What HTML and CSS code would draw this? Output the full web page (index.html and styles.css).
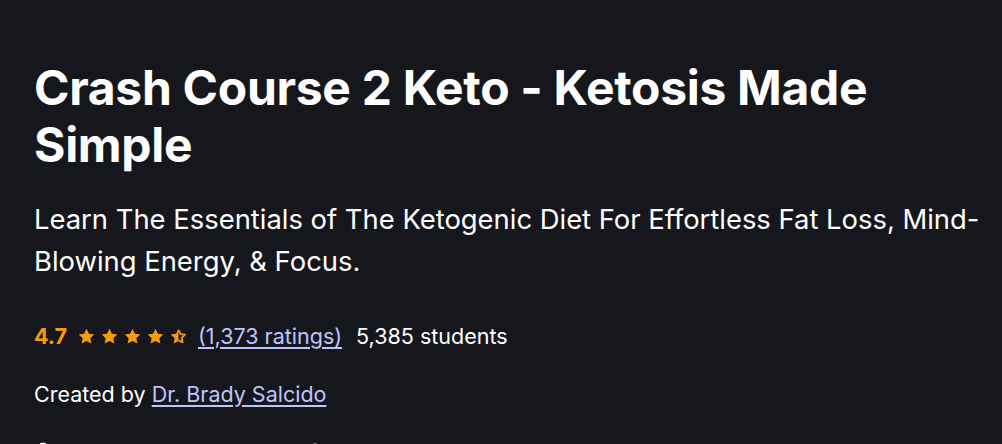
FILE: index.html
```html
<!DOCTYPE html>
<html lang="en">

<head>
  <meta charset="UTF-8">
  <meta name="viewport" content="width=device-width, initial-scale=1.0">
  <title>Crash Course 2 Keto</title>
  <link rel="stylesheet" href="styles.css">
</head>

<body>
  <main class="course">
    <h1 class="title">Crash Course 2 Keto - Ketosis Made Simple</h1>
    <p class="subtitle">Learn The Essentials of The Ketogenic Diet For Effortless Fat Loss, Mind-Blowing Energy, &amp; Focus.</p>

    <div class="rating">
      <span class="score">4.7</span>
      <span class="stars">
        <svg viewBox="0 0 24 24"><path d="M12 1l3.4 7.1 7.6.9-5.6 5.3 1.5 7.7L12 18.2 5.1 22l1.5-7.7L1 9l7.6-.9z" /></svg>
        <svg viewBox="0 0 24 24"><path d="M12 1l3.4 7.1 7.6.9-5.6 5.3 1.5 7.7L12 18.2 5.1 22l1.5-7.7L1 9l7.6-.9z" /></svg>
        <svg viewBox="0 0 24 24"><path d="M12 1l3.4 7.1 7.6.9-5.6 5.3 1.5 7.7L12 18.2 5.1 22l1.5-7.7L1 9l7.6-.9z" /></svg>
        <svg viewBox="0 0 24 24"><path d="M12 1l3.4 7.1 7.6.9-5.6 5.3 1.5 7.7L12 18.2 5.1 22l1.5-7.7L1 9l7.6-.9z" /></svg>
        <svg viewBox="0 0 24 24">
          <path d="M12 1v17.2L5.1 22l1.5-7.7L1 9l7.6-.9z" />
          <path class="outline" d="M12 2.5l2.8 6.1 6.4.8-4.7 4.5 1.3 6.5L12 17.2" />
        </svg>
      </span>
      <a href="#" class="link">(1,373 ratings)</a>
      <span class="students">5,385 students</span>
    </div>

    <p class="author">Created by <a href="#" class="link">Dr. Brady Salcido</a></p>

    <div class="meta">
      <span class="meta-item">
        <svg viewBox="0 0 24 24"><path d="M9 1h6l3 4v17H6V5z" /></svg>
        Last updated 1/2024
      </span>
      <span class="meta-item">
        <svg viewBox="0 0 24 24"><circle cx="12" cy="12" r="10" /></svg>
        English
      </span>
    </div>
  </main>
</body>

</html>
```

FILE: styles.css
```css
* {
  padding: 0;
  margin: 0;
  box-sizing: border-box;
}

body {
  font-family: Inter, "Noto Sans", sans-serif;
  background-color: #16171c;
  color: #ffffff;
  width: 1002px;
  height: 444px;
  overflow: hidden;
}

.course {
  padding: 59px 12px 0 34px;
  display: flex;
  flex-direction: column;
}

.title {
  font-size: 48px;
  font-weight: 700;
  line-height: 57px;
  letter-spacing: -0.3px;
  padding-right: 24px;
}

.subtitle {
  font-size: 27.4px;
  line-height: 42px;
  margin-top: 25px;
}

.rating {
  display: flex;
  align-items: center;
  gap: 11px;
  margin-top: 39px;
  font-size: 21.5px;
  line-height: 30px;
}

.score {
  color: #f69c08;
  font-weight: 700;
}

.stars {
  display: flex;
  gap: 6px;
}

.stars svg {
  width: 17px;
  height: 17px;
  fill: #f69c08;
}

.stars .outline {
  fill: none;
  stroke: #f69c08;
  stroke-width: 2.6;
  stroke-linejoin: round;
}

.link {
  color: #c0c4fc;
  text-decoration: underline;
  text-underline-offset: 3px;
}

.students {
  margin-left: 3px;
}

.author {
  font-size: 21.5px;
  line-height: 30px;
  margin-top: 28px;
}

.meta {
  display: flex;
  gap: 38px;
  margin-top: 33px;
  font-size: 21.5px;
  line-height: 30px;
}

.meta-item {
  display: flex;
  align-items: flex-start;
  gap: 8px;
}

.meta-item svg {
  width: 18px;
  height: 18px;
  fill: #ffffff;
}
```
